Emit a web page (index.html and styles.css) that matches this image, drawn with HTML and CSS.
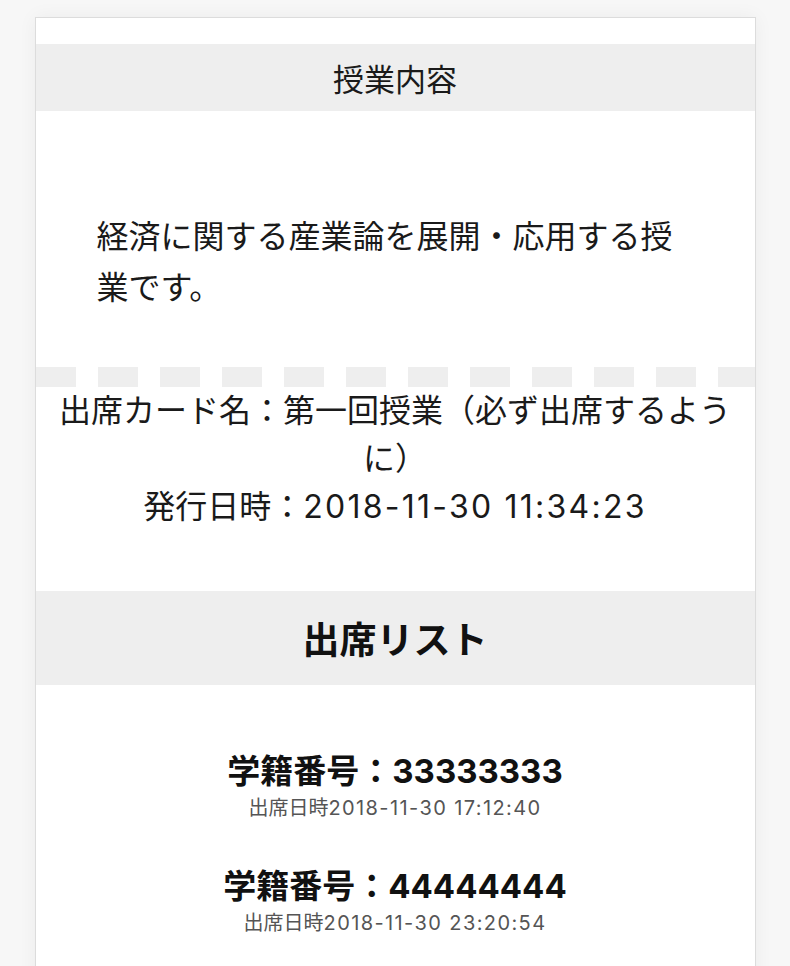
FILE: index.html
```html
<!DOCTYPE html>
<html lang="ja">
<head>
<meta charset="utf-8">
<title>出席カード</title>
<link rel="stylesheet" href="styles.css">
</head>
<body>
<div class="card">
  <div class="section-title">授業内容</div>
  <p class="desc">経済に関する産業論を展開・応用する授業です。</p>
  <div class="dash"></div>
  <div class="card-info">
    <div>出席カード名：第一回授業（必ず出席するように）</div>
    <div>発行日時：<span class="num">2018-11-30 11:34:23</span></div>
  </div>
  <div class="list-title">出席リスト</div>
  <div class="entries">
    <div class="entry">
      <div class="entry-id">学籍番号：33333333</div>
      <div class="entry-time">出席日時<span class="num">2018-11-30 17:12:40</span></div>
    </div>
    <div class="entry">
      <div class="entry-id">学籍番号：44444444</div>
      <div class="entry-time">出席日時<span class="num">2018-11-30 23:20:54</span></div>
    </div>
  </div>
</div>
</body>
</html>
```
FILE: styles.css
```css
html, body {
  margin: 0;
  padding: 0;
}
body {
  background: #f7f7f7;
  font-family: Inter, "Noto Sans CJK JP", sans-serif;
  color: #111;
  padding-top: 17px;
}
.card {
  width: 719px;
  margin: 0 auto;
  background: #fff;
  border: 1px solid #dcdcdc;
  border-bottom: none;
  padding-top: 26px;
  min-height: 960px;
  box-shadow: 0 0 18px rgba(0,0,0,0.05);
}
.section-title {
  height: 67px;
  background: #eeeeee;
  display: flex;
  align-items: center;
  justify-content: center;
  font-size: 31px;
  color: #1a1a1a;
}
.desc {
  margin: 0;
  padding: 100px 61px 54px;
  font-size: 32px;
  line-height: 51px;
  color: #1a1a1a;
}
.dash {
  height: 20px;
  background: repeating-linear-gradient(to right, #eeeeee 0, #eeeeee 40px, #fff 40px, #fff 62px);
}
.card-info {
  padding: 0 16px;
  text-align: center;
  font-size: 32px;
  line-height: 48px;
  color: #1a1a1a;
}
.num {
  letter-spacing: 0.07em;
}
.list-title {
  margin-top: 60px;
  height: 94px;
  background: #eeeeee;
  display: flex;
  align-items: center;
  justify-content: center;
  font-size: 37px;
  font-weight: bold;
  color: #111;
}
.entries {
  padding-top: 64px;
  display: flex;
  flex-direction: column;
  gap: 41px;
  text-align: center;
}
.entry-id {
  font-size: 33px;
  font-weight: bold;
  line-height: 44px;
  color: #111;
}
.entry-time {
  font-size: 20px;
  line-height: 30px;
  color: #555;
}
```
